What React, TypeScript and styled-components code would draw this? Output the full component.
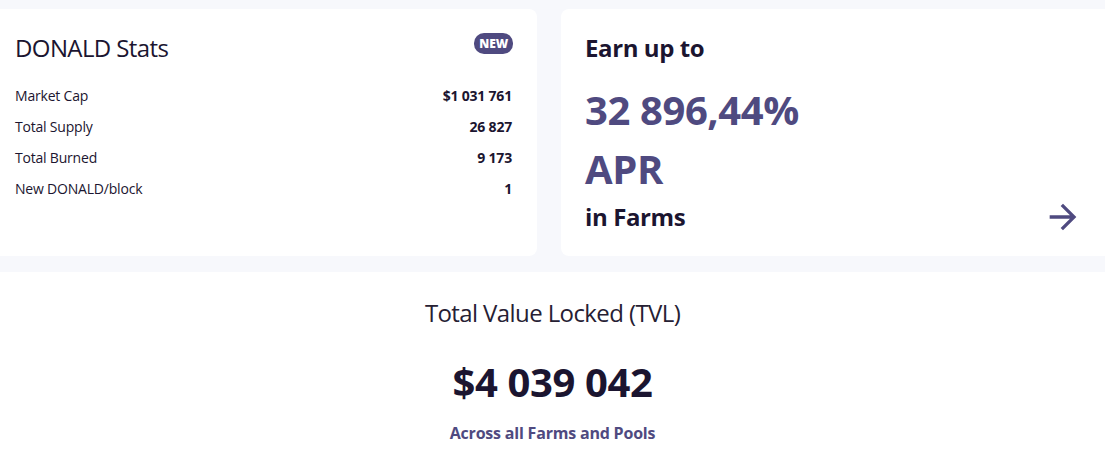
import styled, { createGlobalStyle } from "styled-components";

const GlobalStyle = createGlobalStyle`
  html, body {
    margin: 0;
    padding: 0;
    background: #f7f8fc;
    font-family: "Open Sans", "Noto Sans", sans-serif;
    color: #1b1530;
  }
  * { box-sizing: border-box; }
`;

const purple = "#4f4a80";

const Page = styled.div`
  width: 1105px;
  height: 456px;
  overflow: hidden;
  padding-top: 9px;
`;

const TopRow = styled.div`
  display: grid;
  grid-template-columns: 546px 553px;
  gap: 24px;
  margin-left: -9px;
`;

const Card = styled.div`
  background: #ffffff;
  border-radius: 8px;
  height: 247px;
  padding: 24px;
`;

const StatsCard = styled(Card)`
  display: flex;
  flex-direction: column;
`;

const CardHeader = styled.div`
  display: flex;
  justify-content: space-between;
  align-items: flex-start;
  height: 30px;
  margin-bottom: 17px;
`;

const Title = styled.h2`
  margin: 0;
  font-size: 24px;
  font-weight: 500;
  line-height: 30px;
  letter-spacing: -0.6px;
`;

const Badge = styled.span`
  display: inline-flex;
  align-items: center;
  height: 21px;
  padding: 0 5px;
  border-radius: 10px;
  background: ${purple};
  color: #ffffff;
  font-size: 12px;
  font-weight: 800;
  letter-spacing: -0.1px;
`;

const StatRow = styled.div`
  display: flex;
  justify-content: space-between;
  align-items: center;
  height: 31px;
  font-size: 14px;
`;

const StatLabel = styled.span`
  font-weight: 400;
  letter-spacing: -0.2px;
`;

const StatValue = styled.span`
  font-weight: 700;
  letter-spacing: -0.2px;
  margin-right: 1px;
`;

const EarnCard = styled(Card)`
  display: flex;
  flex-direction: column;
`;

const EarnHeading = styled.div`
  font-size: 24px;
  font-weight: 700;
  line-height: 30px;
  letter-spacing: -0.4px;
`;

const BigPurple = styled.div<{ $mt: number }>`
  font-size: 40px;
  font-weight: 700;
  line-height: 48px;
  color: ${purple};
  margin-top: ${({ $mt }) => $mt}px;
  letter-spacing: -0.4px;
`;

const FarmsRow = styled.div`
  display: flex;
  justify-content: space-between;
  align-items: center;
  width: 506px;
  margin-top: 4px;
`;

const ArrowIcon = styled.svg`
  width: 40px;
  height: 40px;
  fill: ${purple};
  margin-right: 8px;
`;

const TvlCard = styled.div`
  margin-top: 16px;
  background: #ffffff;
  height: 200px;
  display: flex;
  flex-direction: column;
  align-items: center;
  padding-top: 26px;
`;

const TvlTitle = styled.div`
  font-size: 24px;
  font-weight: 400;
  line-height: 30px;
  color: #262033;
  letter-spacing: -0.6px;
`;

const TvlValue = styled.div`
  font-size: 40px;
  font-weight: 700;
  line-height: 48px;
  margin-top: 30px;
  letter-spacing: -0.4px;
`;

const TvlSub = styled.div`
  font-size: 16px;
  font-weight: 700;
  color: ${purple};
  margin-top: 16px;
  letter-spacing: -0.2px;
`;

const stats = [
  { label: "Market Cap", value: "$1 031 761" },
  { label: "Total Supply", value: "26 827" },
  { label: "Total Burned", value: "9 173" },
  { label: "New DONALD/block", value: "1" },
];

export default function App() {
  return (
    <>
      <GlobalStyle />
      <Page>
        <TopRow>
          <StatsCard>
            <CardHeader>
              <Title>DONALD Stats</Title>
              <Badge>NEW</Badge>
            </CardHeader>
            {stats.map((s) => (
              <StatRow key={s.label}>
                <StatLabel>{s.label}</StatLabel>
                <StatValue>{s.value}</StatValue>
              </StatRow>
            ))}
          </StatsCard>
          <EarnCard>
            <EarnHeading>Earn up to</EarnHeading>
            <BigPurple $mt={23}>32 896,44%</BigPurple>
            <BigPurple $mt={11}>APR</BigPurple>
            <FarmsRow>
              <EarnHeading>in Farms</EarnHeading>
              <ArrowIcon viewBox="0 0 24 24">
                <path d="M12 4l-1.41 1.41L16.17 11H4v2h12.17l-5.58 5.59L12 20l8-8z" />
              </ArrowIcon>
            </FarmsRow>
          </EarnCard>
        </TopRow>
        <TvlCard>
          <TvlTitle>Total Value Locked (TVL)</TvlTitle>
          <TvlValue>$4 039 042</TvlValue>
          <TvlSub>Across all Farms and Pools</TvlSub>
        </TvlCard>
      </Page>
    </>
  );
}
